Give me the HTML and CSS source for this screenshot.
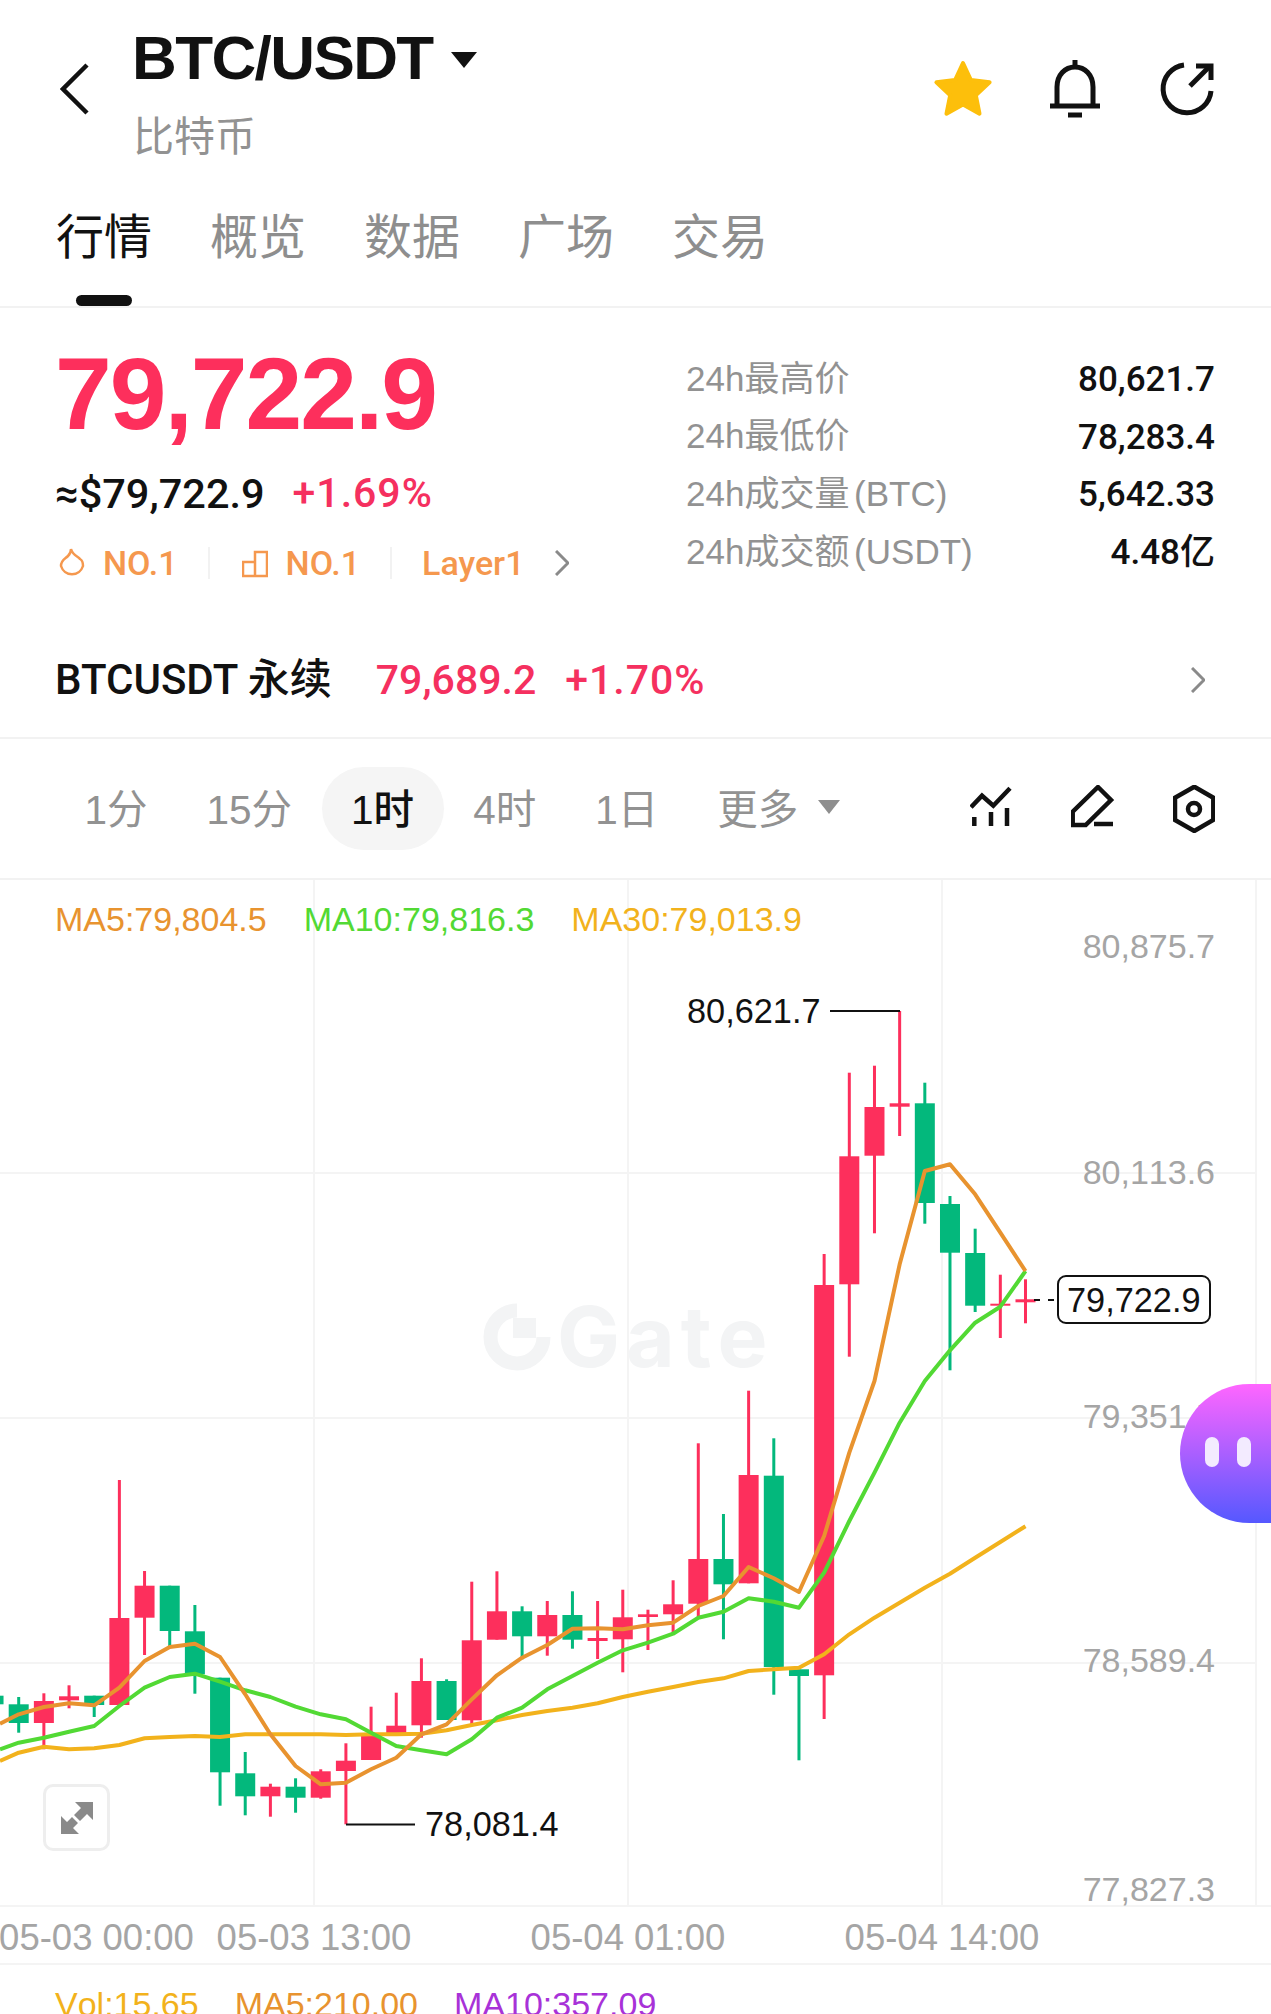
FILE: index.html
```html
<!DOCTYPE html>
<html lang="zh">
<head>
  <meta charset="UTF-8">
  <title>BTC/USDT</title>
  <link rel="stylesheet" href="styles.css">
</head>
<body>
  <div class="header">
    <svg class="back-icon" viewBox="0 0 30 52"><path d="M27 2 L3 26 L27 50"/></svg>
    <div class="title-col">
      <div class="title-row">
        <span class="title">BTC/USDT</span>
        <span class="caret"></span>
      </div>
      <div class="subtitle">比特币</div>
    </div>
    <div class="header-icons">
      <svg class="star-icon" viewBox="0 0 60 60"><path d="M30 3 L37.9 20.1 L56.6 22.3 L42.8 35.2 L46.5 53.7 L30 44.5 L13.5 53.7 L17.2 35.2 L3.4 22.3 L22.1 20.1 Z"/></svg>
      <svg class="line-icon bell-icon" viewBox="0 0 50 58">
        <path d="M25 0 V7"/>
        <path d="M7 46 V27 C7 15 15 7 25 7 C35 7 43 15 43 27 V46"/>
        <path d="M0 46 H50"/>
        <path d="M18 55 H32"/>
      </svg>
      <svg class="line-icon refresh-icon" viewBox="0 0 60 60">
        <path d="M24 5 A24 24 0 1 0 51 31"/>
        <path d="M30 26 L50 6"/>
        <path d="M36 6 H51 V20"/>
      </svg>
    </div>
  </div>

  <div class="tabs">
    <div class="tab active">行情<div class="tab-bar"></div></div>
    <div class="tab">概览</div>
    <div class="tab">数据</div>
    <div class="tab">广场</div>
    <div class="tab">交易</div>
  </div>

  <div class="stats">
    <div class="stats-left">
      <div class="price">79,722.9</div>
      <div class="price-sub">
        <span class="usd">≈$79,722.9</span>
        <span class="red pct">+1.69%</span>
      </div>
      <div class="tags">
        <svg class="tag-icon" viewBox="57 547 26 33"><path d="M69 549 C71 556 76 556 78 559 C80 560 81 563 81 566 A11.5 11.5 0 0 1 59 566 C59 560 63 559 66 556 C68 554 69 552 69 549 Z"/></svg>
        <span class="tag-text">NO.1</span>
        <span class="tag-sep"></span>
        <svg class="tag-icon" viewBox="229 547 26 33"><path d="M230 562 H242 V576 H230 Z M242 552 H254 V576 H242 Z"/></svg>
        <span class="tag-text">NO.1</span>
        <span class="tag-sep"></span>
        <span class="tag-text">Layer1</span>
        <svg class="tag-arrow" viewBox="0 0 14 26"><path d="M1 1 L13 13 L1 25"/></svg>
      </div>
    </div>
    <div class="stats-right">
      <div class="stat-row"><span class="stat-label">24h最高价</span><span class="stat-value">80,621.7</span></div>
      <div class="stat-row"><span class="stat-label">24h最低价</span><span class="stat-value">78,283.4</span></div>
      <div class="stat-row"><span class="stat-label">24h成交量 (BTC)</span><span class="stat-value">5,642.33</span></div>
      <div class="stat-row"><span class="stat-label">24h成交额 (USDT)</span><span class="stat-value">4.48亿</span></div>
    </div>
  </div>

  <div class="perp">
    <span class="perp-name">BTCUSDT 永续</span>
    <span class="perp-price red">79,689.2</span>
    <span class="perp-change red">+1.70%</span>
    <svg class="perp-arrow" viewBox="0 0 14 26"><path d="M1 1 L13 13 L1 25"/></svg>
  </div>

  <div class="periods">
    <div class="period">1分</div>
    <div class="period">15分</div>
    <div class="period active">1时</div>
    <div class="period">4时</div>
    <div class="period">1日</div>
    <div class="period more">更多<span class="caret grey"></span></div>
    <div class="period-icons">
      <svg class="line-icon thin chart-icon" viewBox="969 786 43 44">
        <path d="M970 808.3 L981 796.7 L992.3 806.7 L1009 789.3"/>
        <path d="M973.3 818 V827 M990 813 V827 M1006 809 V827"/>
      </svg>
      <svg class="line-icon thin pencil-icon" viewBox="1071 786 44 44">
        <path d="M1098 788 L1111 801 L1085.7 826 H1072.7 V812.7 Z"/>
        <path d="M1094 825 H1113"/>
      </svg>
      <svg class="line-icon thin hex-icon" viewBox="1173 785 42 48">
        <path d="M1194.3 786.7 L1213.3 797.7 V820 L1194.3 831 L1175 820 V797.7 Z"/>
        <circle cx="1194" cy="809" r="6"/>
      </svg>
    </div>
  </div>

  <div class="chart-wrap">
    <div class="ma-legend">
      <span class="c-orange">MA5:79,804.5</span>
      <span class="c-green">MA10:79,816.3</span>
      <span class="c-yellow">MA30:79,013.9</span>
    </div>
    <svg class="chart" viewBox="0 879 1271 1085">
      <g class="grid">
        <path d="M314 879 V1905 M628 879 V1905 M942 879 V1905 M1256 879 V1905"/>
        <path d="M0 1172 H1256 M0 1417 H1256 M0 1662 H1256 M0 1905 H1271 M0 1963 H1271"/>
      </g>
      <g class="watermark">
        <path d="M517 1309.5 A26.5 26.5 0 1 0 543.5 1336" />
        <rect x="513" y="1317" width="23" height="20"/>
        <text x="557" y="1366">Gate</text>
      </g>
      <g id="candles"></g>
      <g id="lines"></g>

      <text class="axis" x="1215" y="957">80,875.7</text>
      <text class="axis" x="1215" y="1183">80,113.6</text>
      <text class="axis" x="1215" y="1427">79,351.5</text>
      <text class="axis" x="1215" y="1671">78,589.4</text>
      <text class="axis" x="1215" y="1900">77,827.3</text>

      <text class="time" x="96.5" y="1949">05-03 00:00</text>
      <text class="time" x="314" y="1949">05-03 13:00</text>
      <text class="time" x="628" y="1949">05-04 01:00</text>
      <text class="time" x="942" y="1949">05-04 14:00</text>

      <text class="mark" x="687" y="1022">80,621.7</text>
      <path class="mark-line" d="M830 1010 H900"/>
      <text class="mark" x="425" y="1835">78,081.4</text>
      <path class="mark-line" d="M346 1823.5 H415"/>

      <path class="mark-line" d="M1034 1299 H1040 M1048 1299 H1054"/>
      <rect class="price-box" x="1058" y="1275" width="152" height="47" rx="8"/>
      <text class="mark" x="1067" y="1311">79,722.9</text>
    </svg>
    <div class="expand-btn">
      <svg class="expand-icon" viewBox="0 0 32 32">
        <path d="M32 0 V18 L26 12 L19 19 L13 13 L20 6 L14 0 Z"/>
        <path d="M0 32 V14 L6 20 L11 15 L17 21 L12 26 L18 32 Z"/>
      </svg>
    </div>
  </div>

  <div class="vol-legend">
    <span class="c-yellow">Vol:15.65</span>
    <span class="c-orange">MA5:210.00</span>
    <span class="c-purple">MA10:357.09</span>
  </div>

  <div class="bubble"><span class="eye"></span><span class="eye"></span></div>

  <script src="chart.js"></script>
</body>
</html>
```

FILE: styles.css
```css
body {
    font-family: "Liberation Sans", "Noto Sans CJK SC", sans-serif;
    background-color: #ffffff;
    color: #111111;
    margin: 0;
    width: 1271px;
    height: 2014px;
    overflow: hidden;
    position: relative;
}

.red {
    color: #f5305f;
}

.c-orange {
    color: #e8932f;
}

.c-green {
    color: #52d934;
}

.c-yellow {
    color: #f2b21c;
}

.c-purple {
    color: #a832d8;
}

/* header */
.header {
    display: flex;
    height: 180px;
    padding: 22px 51px 0 60px;
    box-sizing: border-box;
}

.back-icon {
    width: 30px;
    height: 52px;
    margin-top: 41px;
    margin-right: 42px;
    fill: none;
    stroke: #111111;
    stroke-width: 4.5;
}

.title-row {
    display: flex;
    align-items: center;
    height: 70px;
}

.title {
    font-size: 62px;
    font-weight: 700;
    letter-spacing: -1.6px;
}

.caret {
    width: 0;
    height: 0;
    margin-left: 18px;
    margin-top: 5px;
    border-left: 13px solid transparent;
    border-right: 13px solid transparent;
    border-top: 16px solid #111111;
}

.caret.grey {
    margin-left: 20px;
    margin-top: 0;
    border-left-width: 11px;
    border-right-width: 11px;
    border-top: 14px solid #8e8e8e;
}

.subtitle {
    margin-top: 23px;
    padding-left: 1px;
    font-size: 41px;
    line-height: 44px;
    color: #929292;
}

.header-icons {
    display: flex;
    gap: 57px;
    margin-left: auto;
    margin-top: 38px;
    height: 60px;
}

.star-icon {
    width: 60px;
    height: 60px;
    fill: #fdbf0b;
    stroke: #fdbf0b;
    stroke-width: 4;
    stroke-linejoin: round;
}

.line-icon {
    fill: none;
    stroke: #111111;
    stroke-width: 5;
}

.line-icon.thin {
    stroke-width: 4.5;
}

.bell-icon {
    width: 50px;
    height: 58px;
}

.refresh-icon {
    width: 60px;
    height: 60px;
    margin-left: 3px;
}

/* tabs */
.tabs {
    display: flex;
    gap: 58px;
    padding: 28px 0 0 56px;
    height: 98px;
    border-bottom: 2px solid #f2f2f2;
}

.tab {
    font-size: 48px;
    line-height: 60px;
    color: #8e8e8e;
}

.tab.active {
    color: #111111;
}

.tab-bar {
    width: 56px;
    height: 11px;
    margin: 27px auto 0;
    border-radius: 6px;
    background-color: #111111;
}

/* price block */
.stats {
    display: flex;
    height: 332px;
    box-sizing: border-box;
    padding: 36px 56px 0 55px;
}

.stats-left {
    width: 631px;
}

.price {
    font-size: 102px;
    font-weight: 700;
    line-height: 100px;
    letter-spacing: -2px;
    color: #fd2f5c;
}

.price-sub {
    display: flex;
    align-items: center;
    gap: 28px;
    height: 50px;
    margin-top: 24px;
    font-family: Roboto, "Liberation Sans", sans-serif;
    font-weight: 500;
    font-size: 41.5px;
}

.pct {
    font-size: 41px;
    letter-spacing: 1px;
}

.tags {
    display: flex;
    align-items: center;
    height: 44px;
    margin-top: 23px;
    padding-left: 2px;
    font-family: Roboto, "Liberation Sans", sans-serif;
    font-weight: 500;
    font-size: 34px;
    color: #f5984e;
}

.tag-icon {
    width: 26px;
    height: 33px;
    margin-left: 2px;
    margin-right: 18px;
    fill: none;
    stroke: #f5984e;
    stroke-width: 2.5;
}

.tag-sep {
    width: 2px;
    height: 32px;
    margin: 0 30px;
    background-color: #f2f2f2;
}

.tag-arrow {
    width: 14px;
    height: 26px;
    margin-left: 31px;
    fill: none;
    stroke: #8a8a8a;
    stroke-width: 3;
}

.stats-right {
    width: 529px;
    margin-top: 6px;
}

.stat-row {
    display: flex;
    justify-content: space-between;
    align-items: center;
    height: 57.6px;
    font-size: 35px;
}

.stat-label {
    line-height: 40px;
    color: #929292;
    word-spacing: -5px;
}

.stat-value {
    padding-top: 3px;
    line-height: 40px;
    font-family: Roboto, "Liberation Sans", "Noto Sans CJK SC", sans-serif;
    font-weight: 500;
}

/* perpetual row */
.perp {
    display: flex;
    align-items: baseline;
    box-sizing: border-box;
    height: 99px;
    padding: 15px 66px 0 55px;
    border-bottom: 2px solid #f2f2f2;
    font-family: Roboto, "Noto Sans CJK SC", sans-serif;
    font-weight: 500;
    font-size: 41px;
    line-height: 50px;
}

.perp-name {
    font-size: 42px;
}

.perp-price {
    margin-left: 44px;
}

.perp-change {
    margin-left: 29px;
    letter-spacing: 1px;
}

.perp-arrow {
    align-self: flex-start;
    width: 14px;
    height: 26px;
    margin-top: 12px;
    margin-left: auto;
    fill: none;
    stroke: #8a8a8a;
    stroke-width: 3;
}

/* period switcher */
.periods {
    display: flex;
    align-items: center;
    height: 139px;
    padding-left: 55px;
    border-bottom: 2px solid #f2f2f2;
    font-size: 40.5px;
    color: #929292;
}

.period {
    display: flex;
    align-items: center;
    box-sizing: border-box;
    height: 83px;
    padding: 0 29.5px 4px;
    border-radius: 42px;
}

.period.active {
    background-color: #f5f5f5;
    color: #111111;
    font-weight: 500;
}

.period-icons {
    display: flex;
    gap: 58px;
    margin-left: auto;
    padding-right: 56px;
}

.chart-icon {
    width: 43px;
    height: 44px;
}

.pencil-icon {
    width: 44px;
    height: 44px;
}

.hex-icon {
    width: 42px;
    height: 48px;
}

/* chart */
.chart-wrap {
    position: relative;
    height: 1085px;
}

.chart {
    display: block;
    width: 1271px;
    height: 1085px;
    font-kerning: none;
}

.ma-legend {
    position: absolute;
    top: 19px;
    left: 55px;
    display: flex;
    gap: 37px;
    font-size: 34px;
    line-height: 40px;
    z-index: 1;
}

.grid path {
    fill: none;
    stroke: #f4f4f4;
    stroke-width: 2;
}

.watermark {
    fill: #f3f4f5;
}

.watermark path {
    fill: none;
    stroke: #f3f4f5;
    stroke-width: 14;
}

.watermark text {
    font-family: Inter, sans-serif;
    font-weight: 700;
    font-size: 84px;
    letter-spacing: 6px;
}

.axis {
    font-size: 34px;
    fill: #a5a5a5;
    text-anchor: end;
}

.time {
    font-size: 36.5px;
    fill: #a5a5a5;
    text-anchor: middle;
}

.mark {
    font-size: 34.3px;
    fill: #111111;
}

.mark-line {
    fill: none;
    stroke: #111111;
    stroke-width: 2;
}

.price-box {
    fill: #ffffff;
    stroke: #111111;
    stroke-width: 2;
}

.ma-line {
    fill: none;
    stroke-width: 4;
    stroke-linejoin: round;
}

.expand-btn {
    position: absolute;
    left: 43px;
    top: 904px;
    width: 67px;
    height: 67px;
    box-sizing: border-box;
    display: flex;
    align-items: center;
    justify-content: center;
    background-color: #ffffff;
    border: 3px solid #eeeeee;
    border-radius: 10px;
}

.expand-icon {
    width: 32px;
    height: 32px;
    fill: #8a8a8a;
}

.vol-legend {
    display: flex;
    gap: 36px;
    padding: 19px 0 0 55px;
    font-size: 34px;
    line-height: 40px;
    font-kerning: none;
}

/* floating assistant */
.bubble {
    position: absolute;
    top: 1384px;
    right: 0;
    width: 91px;
    height: 139px;
    display: flex;
    gap: 18px;
    padding: 53px 0 0 25px;
    box-sizing: border-box;
    border-radius: 70px 0 0 70px;
    background: linear-gradient(#ff66ff, #5558ff);
}

.eye {
    width: 14px;
    height: 30px;
    border-radius: 7px;
    background-color: #f3ebff;
}
```

FILE: chart.js
```js
// [x index, direction, body top, body bottom, wick top, wick bottom]
const UP = 'up', DOWN = 'down';
const candles = [
    [-1, DOWN, 1694.7, 1703.3, 1694.7, 1703.3],
    [0, DOWN, 1703.3, 1722, 1696, 1731.7],
    [1, UP, 1700, 1722, 1692.3, 1748.3],
    [2, UP, 1695.3, 1699.3, 1684.3, 1707.3],
    [3, DOWN, 1694.7, 1704, 1694.7, 1716],
    [4, UP, 1617, 1704, 1479, 1704],
    [5, UP, 1584.7, 1616.7, 1570, 1654],
    [6, DOWN, 1584.7, 1630, 1584.7, 1645],
    [7, DOWN, 1630.3, 1673.3, 1604, 1692.7],
    [8, DOWN, 1676.7, 1771.3, 1676.7, 1804.7],
    [9, DOWN, 1772.3, 1795.3, 1751, 1814.3],
    [10, UP, 1785.7, 1795.3, 1782.7, 1815.7],
    [11, DOWN, 1785.7, 1796.7, 1777.3, 1811.7],
    [12, UP, 1770.3, 1796.7, 1768.3, 1797.7],
    [13, UP, 1759.7, 1770, 1742.3, 1823.3],
    [14, UP, 1735, 1759, 1705.7, 1759],
    [15, UP, 1724.7, 1732.7, 1691.7, 1733.3],
    [16, UP, 1680, 1724.3, 1657.3, 1736.7],
    [17, DOWN, 1680, 1719, 1678.3, 1719],
    [18, UP, 1639.3, 1719.3, 1580.7, 1723.3],
    [19, UP, 1610.3, 1638.7, 1570.3, 1638.7],
    [20, DOWN, 1610.3, 1635.3, 1605.3, 1658.3],
    [21, UP, 1614, 1635.3, 1600, 1654.7],
    [22, DOWN, 1614, 1638.7, 1590.3, 1647.7],
    [23, UP, 1637, 1640, 1600, 1658],
    [24, UP, 1616.3, 1638.3, 1588.7, 1671.3],
    [25, UP, 1613.3, 1616, 1608.7, 1649],
    [26, UP, 1603.3, 1613.3, 1579.3, 1631.7],
    [27, UP, 1558, 1602.7, 1442.3, 1616],
    [28, DOWN, 1558, 1583.3, 1513, 1638.3],
    [29, UP, 1474, 1582.3, 1389.7, 1582.3],
    [30, DOWN, 1474.7, 1666, 1437.3, 1693.7],
    [31, DOWN, 1668.3, 1675, 1668.3, 1759.3],
    [32, UP, 1284, 1674.3, 1253, 1718],
    [33, UP, 1155.3, 1283.3, 1071.7, 1355.7],
    [34, UP, 1106, 1154.7, 1064.7, 1232.3],
    [35, UP, 1102.3, 1105.7, 1010, 1135],
    [36, DOWN, 1102.3, 1202, 1081.7, 1222.7],
    [37, DOWN, 1203, 1251.7, 1195, 1369.3],
    [38, DOWN, 1252, 1304.7, 1227.7, 1311],
    [39, UP, 1302.7, 1304.7, 1273.7, 1337],
    [40, UP, 1298.3, 1301.3, 1278.3, 1322.3]
];

// y of each average, starts at the left edge of the chart, then one per candle
const ma30 = [1760, 1751.7, 1745.7, 1748.3, 1747.3, 1744, 1737.3, 1736, 1735, 1736, 1733.3, 1733.3, 1733.3, 1733.3, 1734, 1733.3, 1733.3, 1732.7, 1729.3, 1724, 1719.3, 1714, 1710, 1706.7, 1702.3, 1696, 1690.7, 1686, 1681, 1677.3, 1670, 1668.3, 1666.7, 1653.3, 1633.3, 1616.7, 1601.7, 1586.7, 1572.7, 1556.7, 1541, 1525.3];
const ma10 = [1748.3, 1741.7, 1736.7, 1730.7, 1725, 1705, 1686.7, 1676, 1672.7, 1680.7, 1689.3, 1696, 1705.7, 1713.3, 1718.3, 1731.7, 1745, 1749.3, 1753.3, 1738.3, 1716.7, 1706.7, 1688.3, 1675, 1661.7, 1649.3, 1641.7, 1632.7, 1616.7, 1610.7, 1597.3, 1600.7, 1606.7, 1571.7, 1520, 1471.7, 1421.7, 1380, 1349.3, 1321.7, 1305.7, 1270];
const ma5 = [1722.7, 1713.3, 1706, 1702.3, 1704.3, 1686.7, 1660, 1646, 1642.7, 1656, 1693.3, 1733.3, 1765, 1783.3, 1781.7, 1768.3, 1756.7, 1733.3, 1723.3, 1698.3, 1674.3, 1656.7, 1644, 1627.7, 1627.3, 1628.3, 1624.3, 1621.7, 1605, 1595, 1566, 1577.3, 1591, 1535, 1451.7, 1380, 1263.3, 1170, 1163.3, 1193.3, 1231.7, 1270];

const SVG_NS = 'http://www.w3.org/2000/svg';
const STEP = 25.17;
const LAST_X = 1025.5;

function xOf(i) {
    return LAST_X - (40 - i) * STEP;
}

function add(parent, tag, attrs) {
    const el = document.createElementNS(SVG_NS, tag);
    Object.keys(attrs).forEach(key => el.setAttribute(key, attrs[key]));
    parent.appendChild(el);
}

const candleGroup = document.getElementById('candles');
candles.forEach(c => {
    const color = c[1] === UP ? '#fd2f5c' : '#03b87c';
    const x = xOf(c[0]);
    add(candleGroup, 'rect', { x: x - 1.5, y: c[4], width: 3, height: c[5] - c[4], fill: color });
    add(candleGroup, 'rect', { x: x - 10, y: c[2], width: 20, height: c[3] - c[2], fill: color });
});

const lineGroup = document.getElementById('lines');
[[ma30, '#f2b21c'], [ma10, '#52d934'], [ma5, '#e8932f']].forEach(line => {
    const points = line[0].map((y, n) => (n === 0 ? 0 : xOf(n - 1)) + ',' + y).join(' ');
    add(lineGroup, 'polyline', { class: 'ma-line', points: points, stroke: line[1] });
});
```
